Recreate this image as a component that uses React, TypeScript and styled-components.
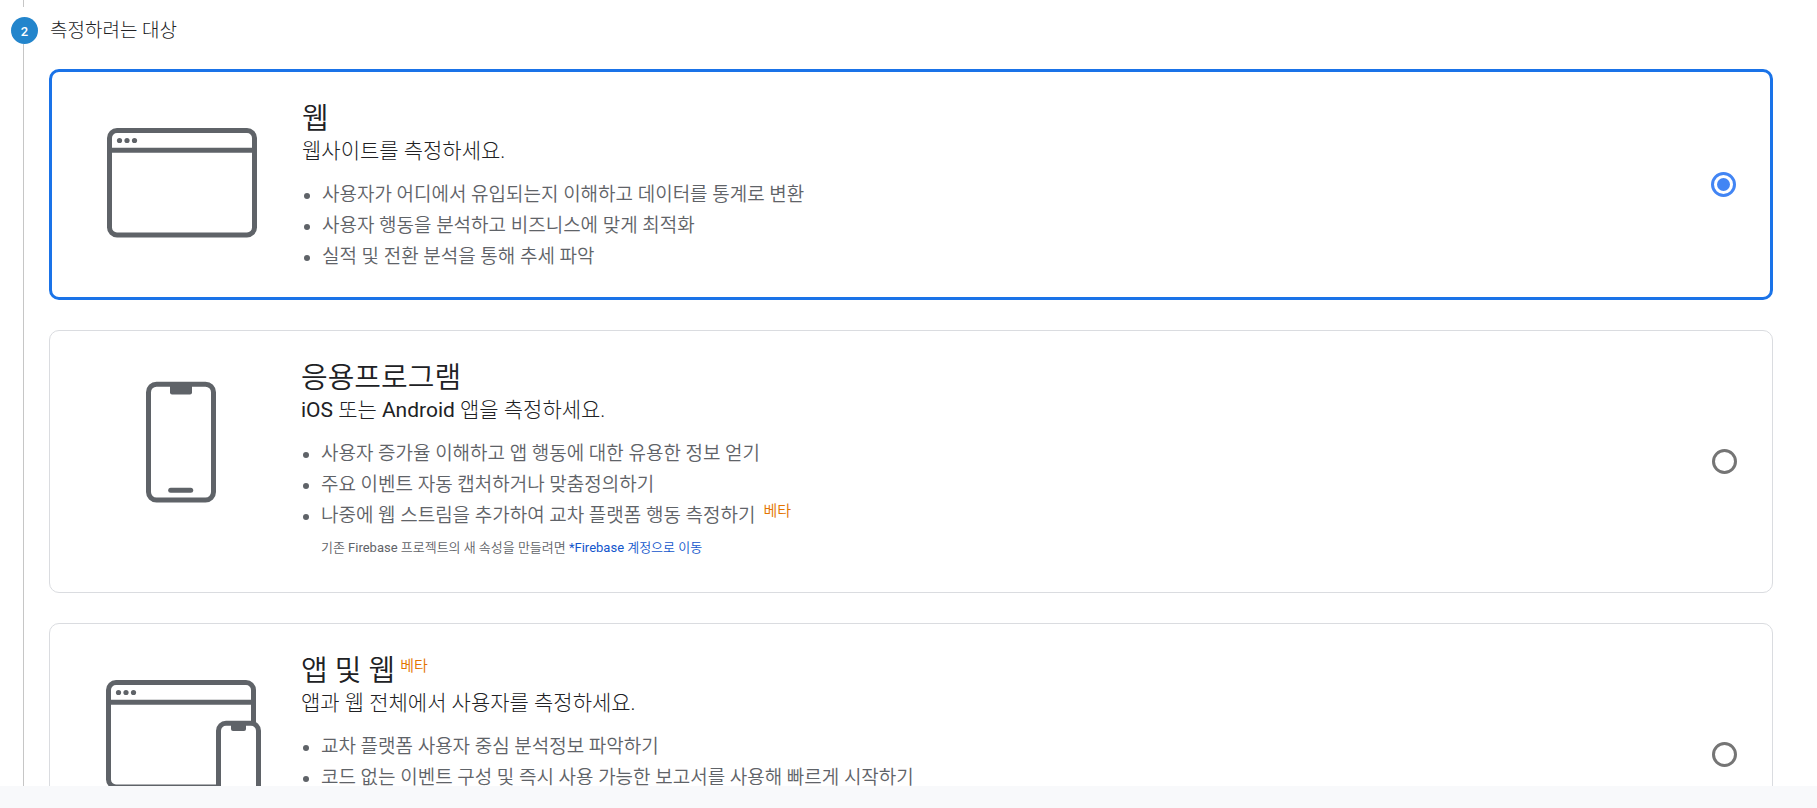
import React, { useState } from "react";
import styled, { createGlobalStyle, css } from "styled-components";

const GlobalStyle = createGlobalStyle`
  *, *::before, *::after { box-sizing: border-box; }
  body {
    margin: 0;
    background: #f8f9fb;
    color: #202124;
    font-family: Roboto, "Noto Sans CJK KR", sans-serif;
    font-weight: 350;
  }
`;

const Page = styled.div`
  display: flex;
  flex-direction: column;
  height: 100vh;
`;

const Content = styled.main`
  flex: 1;
  min-height: 0;
  overflow-y: auto;
  scrollbar-width: none;
  background: #fff;
`;

const Footer = styled.footer`
  flex: none;
  height: 22px;
  background: #f8f9fb;
`;

const Step = styled.section`
  display: grid;
  grid-template-columns: 27px minmax(0, 1fr);
  column-gap: 11px;
  padding: 0 44px 0 11px;
`;

const Rail = styled.div`
  display: flex;
  flex-direction: column;
  align-items: center;
`;

const RailLine = styled.span<{ $lead?: boolean }>`
  width: 1px;
  margin-right: 2px;
  background: #c6c6c6;
  ${(p) =>
    p.$lead
      ? css`
          height: 7px;
          margin-bottom: 10px;
        `
      : css`
          flex: 1;
        `}
`;

const StepNumber = styled.span`
  display: flex;
  align-items: center;
  justify-content: center;
  width: 27px;
  height: 27px;
  padding-top: 2px;
  border-radius: 50%;
  background: #2385cc;
  color: #fff;
  font-size: 13px;
  font-weight: 500;
`;

const StepTitle = styled.h2`
  margin: 0;
  padding: 16px 0 23px 1px;
  font-size: 19px;
  line-height: 30px;
  font-weight: 300;
`;

const Options = styled.div`
  display: grid;
  gap: 30px;
  padding-bottom: 30px;
`;

const Card = styled.article<{ $selected: boolean; $tall?: boolean }>`
  display: flex;
  align-items: flex-start;
  min-height: ${(p) => (p.$tall ? 263 : 0)}px;
  padding: ${(p) => (p.$selected ? "0 34px 0 55px" : "0 35px 0 56px")};
  border: ${(p) => (p.$selected ? "3px solid #1a73e8" : "1px solid #dadce0")};
  border-radius: 10px;
`;

const Illustration = styled.svg`
  flex: none;
  width: 160px;
  height: 122px;
  margin: 50px 35px 0 0;
  fill: none;
  stroke: #5f6368;
  stroke-width: 5;
`;

const Details = styled.div`
  flex: 1;
  min-width: 0;
  padding: 29px 0 25px;
`;

const Title = styled.label`
  display: flex;
  align-items: flex-start;
  font-size: 29px;
  line-height: 36px;
`;

const Subtitle = styled.p`
  margin: 0 0 14px;
  font-size: 21px;
  line-height: 28px;
  font-weight: 300;
`;

const List = styled.ul`
  margin: 0;
  padding: 0;
  list-style: none;
  color: #5f6368;
  font-size: 19px;
  line-height: 31px;
`;

const Item = styled.li`
  display: flex;
  align-items: flex-start;

  &::before {
    content: "";
    flex: none;
    width: 6px;
    height: 6px;
    margin: 14px 12px 0 2px;
    border-radius: 50%;
    background: #5f6368;
  }
`;

const Beta = styled.span<{ $inList?: boolean }>`
  margin-left: ${(p) => (p.$inList ? 8 : 5)}px;
  color: #e37400;
  font-size: 15px;
  line-height: ${(p) => (p.$inList ? 22 : 26)}px;
`;

const Note = styled.p`
  margin: 0 0 2px 20px;
  color: #5f6368;
  font-size: 13px;
  line-height: 34px;
`;

const Latin = styled.span`
  font-weight: 400;
`;

const NoteLink = styled.a`
  color: #1155cc;
  text-decoration: none;
`;

const Radio = styled.input`
  appearance: none;
  flex: none;
  align-self: center;
  display: grid;
  place-items: center;
  width: 25px;
  height: 25px;
  margin: 0;
  border: 3px solid #757575;
  border-radius: 50%;

  &:checked {
    border-color: #4285f4;
  }

  &:checked::before {
    content: "";
    width: 13px;
    height: 13px;
    border-radius: 50%;
    background: #4285f4;
  }
`;

const BrowserShape = () => (
  <>
    <rect x="2.5" y="8.5" width="145" height="104.5" rx="7.5" />
    <path d="M2.5 28.3h145" />
    <g fill="#5f6368" stroke="none">
      <circle cx="12.5" cy="18.5" r="2.6" />
      <circle cx="20" cy="18.5" r="2.6" />
      <circle cx="27.5" cy="18.5" r="2.6" />
    </g>
  </>
);

const WebArt = () => (
  <Illustration viewBox="0 0 160 122" aria-hidden="true">
    <BrowserShape />
  </Illustration>
);

const PhoneArt = () => (
  <Illustration viewBox="0 0 160 122" aria-hidden="true">
    <rect x="42.5" y="3.2" width="65" height="115.8" rx="8" />
    <path d="M64 4h22v7.500a2 2 0 0 1-2 2H66a2 2 0 0 1-2-2z" fill="#5f6368" stroke="none" />
    <path d="M64.700 109.200h20" strokeLinecap="round" />
  </Illustration>
);

const AppWebArt = () => (
  <Illustration viewBox="0 0 160 122" aria-hidden="true">
    <BrowserShape />
    <rect x="112.5" y="49.2" width="40" height="70" rx="7.5" fill="#fff" />
    <path d="M125 50h15v5a2 2 0 0 1-2 2h-11a2 2 0 0 1-2-2z" fill="#5f6368" stroke="none" />
  </Illustration>
);

interface OptionProps {
  id: string;
  art: React.ReactNode;
  title: string;
  titleBeta?: boolean;
  subtitle: React.ReactNode;
  items: React.ReactNode[];
  note?: React.ReactNode;
  tall?: boolean;
  selected: boolean;
  onSelect: (id: string) => void;
}

const Option = (p: OptionProps) => (
  <Card $selected={p.selected} $tall={p.tall}>
    {p.art}
    <Details>
      <Title htmlFor={p.id}>
        {p.title}
        {p.titleBeta && <Beta>베타</Beta>}
      </Title>
      <Subtitle>{p.subtitle}</Subtitle>
      <List>
        {p.items.map((item, i) => (
          <Item key={i}>{item}</Item>
        ))}
      </List>
      {p.note && <Note>{p.note}</Note>}
    </Details>
    <Radio
      type="radio"
      name="target"
      id={p.id}
      checked={p.selected}
      onChange={() => p.onSelect(p.id)}
    />
  </Card>
);

export default function App() {
  const [target, setTarget] = useState("web");
  const choice = (id: string) => ({ id, selected: target === id, onSelect: setTarget });

  return (
    <Page>
      <GlobalStyle />
      <Content>
        <Step>
          <Rail>
            <RailLine $lead />
            <StepNumber>2</StepNumber>
            <RailLine />
          </Rail>
          <div>
            <StepTitle>측정하려는 대상</StepTitle>
            <Options>
              <Option
                {...choice("web")}
                art={<WebArt />}
                title="웹"
                subtitle="웹사이트를 측정하세요."
                items={[
                  "사용자가 어디에서 유입되는지 이해하고 데이터를 통계로 변환",
                  "사용자 행동을 분석하고 비즈니스에 맞게 최적화",
                  "실적 및 전환 분석을 통해 추세 파악",
                ]}
              />
              <Option
                {...choice("app")}
                art={<PhoneArt />}
                title="응용프로그램"
                subtitle={
                  <>
                    <Latin>iOS</Latin> 또는 <Latin>Android</Latin> 앱을 측정하세요.
                  </>
                }
                items={[
                  "사용자 증가율 이해하고 앱 행동에 대한 유용한 정보 얻기",
                  "주요 이벤트 자동 캡처하거나 맞춤정의하기",
                  <>
                    나중에 웹 스트림을 추가하여 교차 플랫폼 행동 측정하기
                    <Beta $inList>베타</Beta>
                  </>,
                ]}
                note={
                  <>
                    기존 <Latin>Firebase</Latin> 프로젝트의 새 속성을 만들려면{" "}
                    <NoteLink href="#firebase">
                      <Latin>*Firebase</Latin> 계정으로 이동
                    </NoteLink>
                  </>
                }
              />
              <Option
                {...choice("app-web")}
                art={<AppWebArt />}
                tall
                title="앱 및 웹"
                titleBeta
                subtitle="앱과 웹 전체에서 사용자를 측정하세요."
                items={[
                  "교차 플랫폼 사용자 중심 분석정보 파악하기",
                  "코드 없는 이벤트 구성 및 즉시 사용 가능한 보고서를 사용해 빠르게 시작하기",
                ]}
              />
            </Options>
          </div>
        </Step>
      </Content>
      <Footer />
    </Page>
  );
}
